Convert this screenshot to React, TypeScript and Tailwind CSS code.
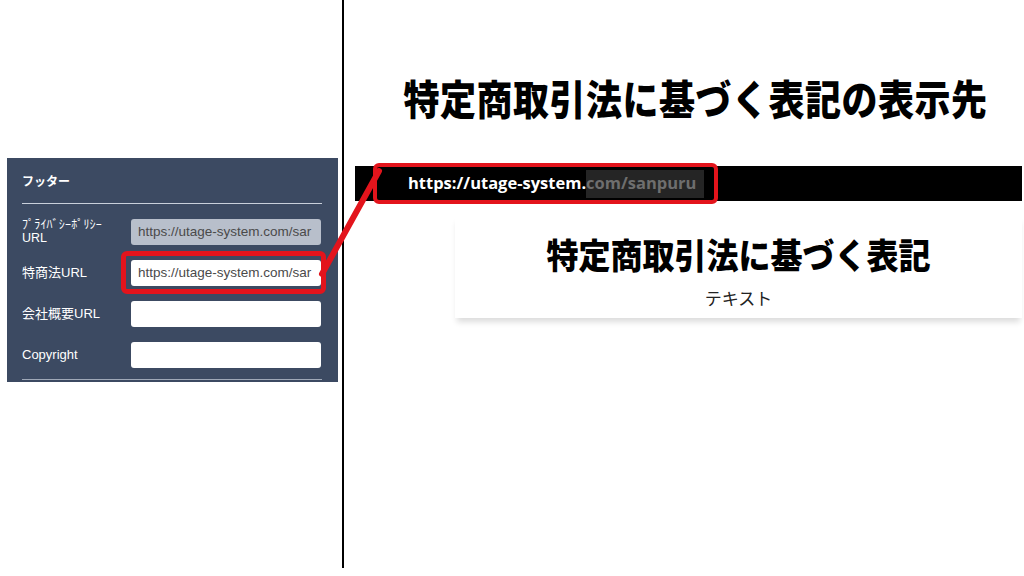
import React from 'react';

const jp = { fontFamily: '"Liberation Sans", "Noto Sans CJK JP", sans-serif' };
const heavy = { fontFamily: '"Noto Sans CJK JP", sans-serif' };
const sans = { fontFamily: '"Open Sans", "Noto Sans", sans-serif' };

const rows = [
  { label: 'ﾌﾟﾗｲﾊﾞｼｰﾎﾟﾘｼｰ', sub: 'URL', value: 'https://utage-system.com/sar', disabled: true },
  { label: '特商法URL', value: 'https://utage-system.com/sar', highlight: true },
  { label: '会社概要URL', value: '' },
  { label: 'Copyright', value: '' },
];

const FooterPanel: React.FC = () => (
  <div className="mt-[158px] ml-[7px] w-[331px] h-[224px] bg-[#3c4a62] pl-[15px] pr-[16px] flex flex-col" style={jp}>
    <div className="h-[45px] flex items-center text-[12px] font-bold text-white pt-[3px]">フッター</div>
    <div className="h-px bg-[#c9d0db]" />
    <div className="flex flex-col gap-[15px] mt-[15px]">
      {rows.map((r) => (
        <div key={r.label} className="relative flex items-center h-[26px]">
          <div className="w-[109px] text-white">
            {r.sub ? (
              <div className="leading-[13px]">
                <div className="text-[12px] tracking-[0.2px]">{r.label}</div>
                <div className="text-[12.5px]">{r.sub}</div>
              </div>
            ) : (
              <div className="text-[13px]">{r.label}</div>
            )}
          </div>
          <div
            className={
              'w-[190px] h-[26px] rounded-[3px] flex items-center pl-[7px] overflow-hidden whitespace-nowrap text-[13.5px] text-[#4a4a4a] ' +
              (r.disabled ? 'bg-[#b8bfcb]' : 'bg-white')
            }
          >
            {r.value}
          </div>
          {r.highlight && (
            <div className="absolute left-[99px] top-[-9px] w-[205px] h-[43px] border-[5px] border-[#e3141c] rounded-[6px]" />
          )}
        </div>
      ))}
    </div>
    <div className="mt-auto mb-[2px] h-px bg-[#c9d0db] opacity-70" />
  </div>
);

const Preview: React.FC = () => (
  <div className="flex-1 flex flex-col pl-[11px] pr-[2px]">
    <div
      className="mt-[74px] ml-[14px] h-[46px] flex items-center justify-center text-[36px] font-black text-black leading-none scale-y-[1.15] tracking-[0.5px]"
      style={heavy}
    >
      特定商取引法に基づく表記の表示先
    </div>
    <div className="relative mt-[46px] h-[35px] bg-black flex items-center pl-[53px]">
      <span className="text-[16.5px] font-bold text-white" style={sans}>
        https://utage-system.
      </span>
      <span className="h-[28px] flex items-center bg-[#252525] text-[16.5px] font-bold text-[#6e6e6e] pr-[8px]" style={sans}>
        com/sanpuru
      </span>
      <div className="absolute left-[18px] top-[-3px] w-[345px] h-[41px] border-[4px] border-[#e3141c] rounded-[6px]" />
    </div>
    <div className="ml-[100px] mt-[14px] bg-white shadow-[0_6px_6px_-2px_rgba(0,0,0,0.14)] flex flex-col items-center pb-[8px]">
      <div className="mt-[19px] text-[32px] font-black text-black leading-[40px] scale-y-[1.1]" style={heavy}>
        特定商取引法に基づく表記
      </div>
      <div className="mt-[12px] text-[17px] text-[#222] leading-[24px]" style={heavy}>
        テキスト
      </div>
    </div>
  </div>
);

export default function App() {
  return (
    <div className="relative w-[1024px] h-[576px] bg-white overflow-hidden flex">
      <div className="w-[342px]">
        <FooterPanel />
      </div>
      <div className="w-[2px] h-[568px] bg-black" />
      <Preview />
      <svg className="absolute inset-0 pointer-events-none" width="1024" height="576">
        <line x1="322" y1="274" x2="379" y2="171" stroke="#e3141c" strokeWidth="6" strokeLinecap="round" />
      </svg>
    </div>
  );
}
